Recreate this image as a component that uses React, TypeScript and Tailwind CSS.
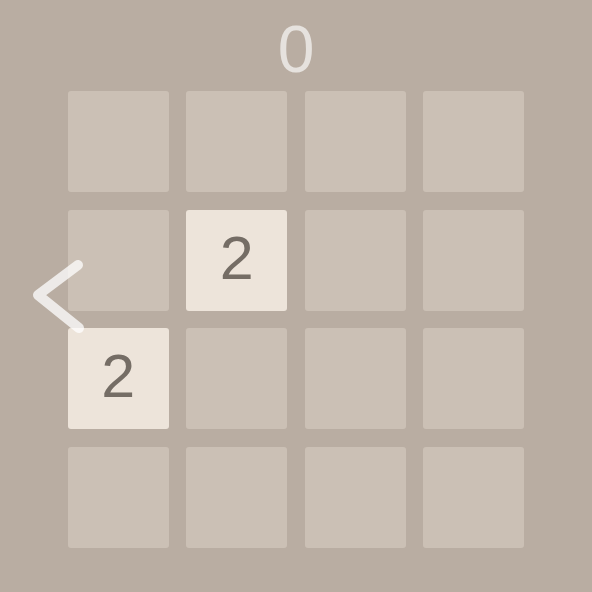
const board = [
  [0, 0, 0, 0],
  [0, 2, 0, 0],
  [2, 0, 0, 0],
  [0, 0, 0, 0],
];

function Tile({ value }: { value: number }) {
  if (value === 0) {
    return <div className="w-[101px] h-[101px] rounded-[3px] bg-[#cbc0b5]" />;
  }
  return (
    <div className="w-[101px] h-[101px] rounded-[3px] bg-[#ede4da] flex items-center justify-center pb-[4px]">
      <span className="text-[61px] leading-none text-[#756d65] font-['Liberation_Sans',Arial,sans-serif]">
        {value}
      </span>
    </div>
  );
}

export default function App() {
  return (
    <div className="relative w-[592px] h-[592px] bg-[#b9ada2] overflow-hidden font-['Liberation_Sans',Arial,sans-serif]">
      <div className="flex flex-col items-center">
        <div className="h-[91px] pt-[16px] text-[66px] leading-none text-[#e6e2de]">0</div>
        <div className="grid grid-cols-4 gap-[17.5px]">
          {board.flat().map((v, i) => (
            <Tile key={i} value={v} />
          ))}
        </div>
      </div>
      {/* swipe hint */}
      <svg
        className="absolute left-0 top-0"
        width="592"
        height="592"
        viewBox="0 0 592 592"
        fill="none"
      >
        <path
          d="M78 265 L38 295 L79 328"
          stroke="rgba(255,255,255,0.75)"
          strokeWidth="10"
          strokeLinecap="round"
          strokeLinejoin="round"
        />
      </svg>
    </div>
  );
}
